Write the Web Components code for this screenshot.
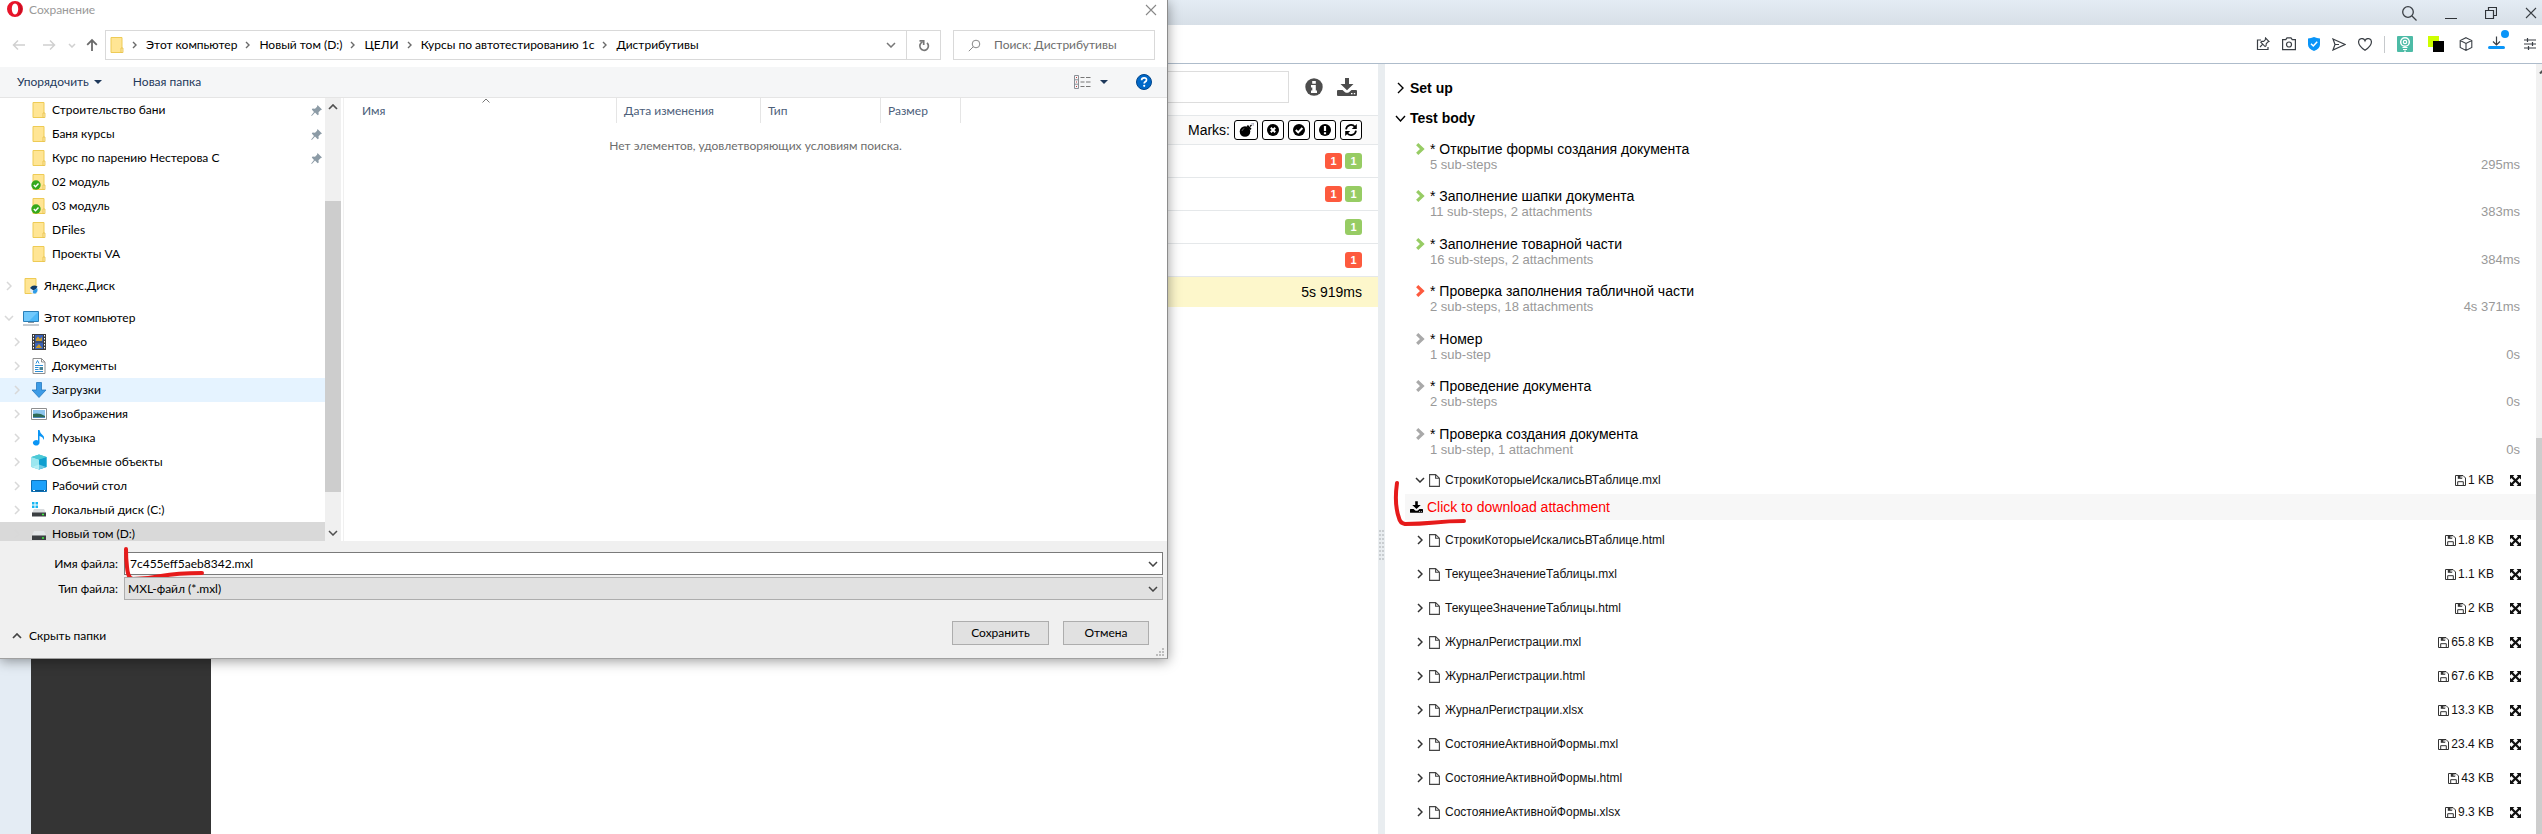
<!DOCTYPE html>
<html lang="ru">
<head>
<meta charset="utf-8">
<title>Сохранение</title>
<style>
  html, body { margin: 0; height: 100%; }
  body { font: 14px/16px "Liberation Sans", Arial, sans-serif; color: #000; overflow: hidden; background: #fff; }
</style>
</head>
<body>
<app-desktop></app-desktop>

<script>
const TRAY = '<path fill="currentColor" fill-rule="evenodd" d="M8 0h4v6h4.500L10 12.200 3.500 6H8zM1 12h4.500l2.500 2.200q2 1.300 4 0l2.500-2.200H19q1 0 1 1v4q0 1-1 1H1q-1 0-1-1v-4q0-1 1-1zm13 3v1.300h1.500V15zm2.800 0v1.300h1.400V15z"/>';
const ICONS = {
  opera: [16, 16, '<path fill="#e8152a" fill-rule="evenodd" d="M8 0a8 8 0 1 0 0 16A8 8 0 0 0 8 0zm0 2.600c2 0 3.200 2.400 3.200 5.400S10 13.400 8 13.400 4.800 11 4.800 8 6 2.600 8 2.600z"/><path fill="#a50a1c" d="M10.500 1.200C13 2.400 15 4.800 15 8s-2 5.600-4.500 6.800C12.300 13 13 10.500 13 8s-.7-5-2.500-6.800z" opacity=".55"/>'],
  back: [14, 12, '<path d="M13 6H1.500M6 1.500 1.500 6 6 10.500" fill="none" stroke="currentColor" stroke-width="1.500"/>'],
  forward: [14, 12, '<path d="M1 6h11.500M8 1.500 12.500 6 8 10.500" fill="none" stroke="currentColor" stroke-width="1.500"/>'],
  up: [12, 14, '<path d="M6 13V2M1.200 6.800 6 2l4.800 4.800" fill="none" stroke="currentColor" stroke-width="1.800"/>'],
  down: [10, 6, '<path d="M1 1l4 4 4-4" fill="none" stroke="currentColor" stroke-width="1.500"/>'],
  downSmall: [8, 5, '<path d="M1 1l3 3 3-3" fill="none" stroke="currentColor" stroke-width="1.500"/>'],
  upSmall: [8, 5, '<path d="M.5 4.500 4 1l3.500 3.500" fill="none" stroke="currentColor"/>'],
  upCaret: [10, 6, '<path d="M1 5l4-4 4 4" fill="none" stroke="currentColor" stroke-width="1.700"/>'],
  crumb: [5, 8, '<path d="M1 1l3 3-3 3" fill="none" stroke="currentColor" stroke-width="1.400"/>'],
  refresh: [12, 13, '<path d="M4.500 3A4.300 4.300 0 1 0 9 3.800" fill="none" stroke="currentColor" stroke-width="1.700"/><path d="M1.500 1.800h4.200V6" fill="none" stroke="currentColor" stroke-width="1.700"/>'],
  find: [13, 13, '<circle cx="8" cy="5" r="3.800" fill="none" stroke="currentColor"/><path d="M5.200 7.800.8 12.200" stroke="currentColor"/>'],
  close: [12, 12, '<path d="M1 1l10 10M11 1 1 11" stroke="currentColor" stroke-width="1.100"/>'],
  triangle: [8, 4, '<path d="M0 0h8L4 4z" fill="currentColor"/>'],
  views: [17, 14, '<path d="M.5.5h4v13h-4zM.5 4.800h4M.5 9.200h4" fill="none" stroke="#8a8f96"/><path d="M2 2.500h1M2 7h1M2 11.500h1" stroke="#c23b3b"/><path d="M6.500 2.500h4M12 2.500h4.500M6.500 7h4M12 7h4.500M6.500 11.500h4M12 11.500h4.500" stroke="#777"/>'],
  help: [16, 16, '<circle cx="8" cy="8" r="7.500" fill="#0068c8" stroke="#00458a"/><path d="M5.600 6.300q0-2.500 2.500-2.500t2.400 2.100q0 1.100-1.200 1.900-1.100.7-1.100 1.700" fill="none" stroke="#fff" stroke-width="1.700"/><circle cx="8.200" cy="11.800" r="1.100" fill="#fff"/>'],
  folder: [16, 16, '<path d="M2 .5h11v15H2z" fill="#ffe594" stroke="#eecb55"/><path d="M12 11h2v4.500h-2z" fill="#ffe9a6" stroke="#e6c04a" stroke-width=".8"/>'],
  folderDone: [16, 16, '<path d="M2 .5h11v15H2z" fill="#ffe594" stroke="#eecb55"/><path d="M12 11h2v4.500h-2z" fill="#ffe9a6" stroke="#e6c04a" stroke-width=".8"/><circle cx="5" cy="11" r="4.700" fill="#35a81c"/><path d="M2.800 11l1.700 1.700 3-3.200" fill="none" stroke="#fff" stroke-width="1.400"/>'],
  yandex: [16, 16, '<path d="M2 .5h11v15H2z" fill="#ffe594" stroke="#eecb55"/><circle cx="11" cy="12" r="4" fill="#e4eef6"/><path d="M7 10q3-4 7.500-1.500-1 3-4 4z" fill="#113a66"/><path d="M10 13l4-3q1.500 3-1.500 5.500-3 .5-2.500-2.500z" fill="#2d9be8"/>'],
  computer: [16, 16, '<path d="M.5 1.500h15v10H.5z" fill="#4db8f8" stroke="#2a7fb8"/><path d="M1 2h14L6 11H1z" fill="#8ad4ff" opacity=".6"/><path d="M5 12.500h6M0 15h16" stroke="#8b98a3"/>'],
  video: [16, 16, '<path d="M1 0h14v16H1z" fill="#3c3c3c"/><path d="M4 1h8v6.500H4zM4 8.500h8V15H4z" fill="#3a62b8"/><path d="M5 5l2-2.500L9 5l2-2v4H5zM5 13l3-3 3 4H5z" fill="#c99a2a"/><path d="M2.500 1v14M13.500 1v14" stroke="#fff" stroke-dasharray="1.500 1.500"/>'],
  document: [16, 16, '<path d="M2 .5h8.500L14 4v11.500H2z" fill="#fff" stroke="#8f8f8f"/><path d="M10.500.5V4H14" fill="none" stroke="#8f8f8f"/><path d="M4 7.500h8M4 9.500h3.500M4 11.500h3.500M4 13.500h8M5 5.500l1.500-3 1.500 3" stroke="#2c8fd6" fill="none"/><path d="M8.500 9h3.500v3H8.500z" fill="#4b8291"/>'],
  download: [16, 16, '<path d="M5.500.5h5V8H15l-7 7.500L1 8h4.500z" fill="#3d9be6" stroke="#2478bf" stroke-width=".8"/>'],
  picture: [16, 16, '<path d="M.5 2.500h15v11H.5z" fill="#fff" stroke="#8f8f8f"/><path d="M2 4h12v8H2z" fill="#8ec5ee"/><path d="M2 8q6-1.500 12 2v2H2z" fill="#2e6b57"/><path d="M2 11h12v1H2z" fill="#4e87b8"/>'],
  music: [16, 16, '<path d="M7 0h1.500q.5 3 3 5t1 5q0-3-4-4v7a3.300 2.700 0 1 1-1.500-2.500z" fill="#0a95f5"/>'],
  objects: [16, 16, '<path d="M8 .5 15.500 3v10L8 15.500.5 13V3z" fill="#35bcd6"/><path d="M.5 3 8 5.500v10L.5 13z" fill="#9be7f0"/><path d="M8 5.500 15.500 3v10L8 15.500z" fill="#0f9fd0"/><path d="M.5 3 8 .5 15.500 3 8 5.500z" fill="#4cc9d6"/><path d="M8 5.500v5L15 13l-7 2.500L1 13l7-2.500" fill="#cdf7fa" opacity=".5"/>'],
  desktop: [16, 16, '<path d="M.5 2.500h15v11H.5z" fill="#1ba1fb" stroke="#0c6fb4"/><path d="M1 12.500h14" stroke="#0b5c96"/><path d="M2 12.500h2M13 12.500h1" stroke="#fff"/>'],
  diskC: [16, 16, '<path d="M1 0h2.500v2.500H1zM4.500 0H7v2.500H4.500zM1 3.500h2.500V6H1zM4.500 3.500H7V6H4.500z" fill="#18b6f2"/><path d="M3 7h10l2 4H1z" fill="#d9dcde"/><path d="M1 10.500h14v4H1z" fill="#3b3f42"/><path d="M11 12.500h2" stroke="#3ef23e" stroke-width="1.500"/>'],
  disk: [16, 16, '<path d="M3 5h10l2 4.500H1z" fill="#e4e7e9"/><path d="M1 9.500h14v4.500H1z" fill="#3b3f42"/><path d="M11 12h2" stroke="#3ef23e" stroke-width="1.500"/>'],
  pin: [11, 11, '<path d="M6.500 0 11 4.500l-1.500.7-2 2 .2 2.300-1 .8-2.700-2.700L.8 11l-.6-.4L3 7 .8 4.500l.8-1 2.400.2 2-2z" fill="#8c9ba6"/>'],
  expander: [6, 10, '<path d="M1 1l4 4-4 4" fill="none" stroke="currentColor" stroke-width="1.500"/>'],
  grip: [8, 8, '<path d="M6 0h2v2H6zM3 3h2v2H3zM6 3h2v2H6zM0 6h2v2H0zM3 6h2v2H3zM6 6h2v2H6z" fill="#bdbdbd"/>'],
  lens: [15, 15, '<circle cx="6" cy="6" r="5.300" fill="none" stroke="#3a3f45" stroke-width="1.300"/><path d="M10 10l4.500 4.500" stroke="#3a3f45" stroke-width="1.300"/>'],
  minimize: [12, 12, '<path d="M0 11.500h12" stroke="#2f3338"/>'],
  restore: [12, 12, '<path d="M.5 3.500h8v8h-8zM3.500 3.500v-3h8v8h-3" fill="none" stroke="#2f3338" stroke-width="1.200"/>'],
  edit: [14, 14, '<path d="M5 3H1.500v9.500H12V10" fill="none" stroke="currentColor" stroke-width="1.200"/><path d="M9.500 1 13 4.500l-1.200.5-1.600 1.800-.1 2-1 .8L4.800 5.200l.9-.9 2 .1 1.600-1.600zM6.800 7.200 4 10" fill="none" stroke="currentColor" stroke-width="1.100"/>'],
  camera: [14, 14, '<path d="M.6 2.600h3.200L5 .8h4l1.200 1.800h3.200v10H.6z" fill="none" stroke="currentColor" stroke-width="1.200"/><circle cx="7" cy="7.500" r="2.500" fill="none" stroke="currentColor" stroke-width="1.200"/>'],
  shield: [12, 14, '<path d="M0 1.500q3-.2 6-1.500 3 1.300 6 1.500v6q0 4-6 6.500-6-2.500-6-6.500z" fill="#0a95f8"/><path d="M3 6.800 5.300 9 9.200 4.800" fill="none" stroke="#fff" stroke-width="1.500"/>'],
  send: [14, 13, '<path d="M1 1l12 5.500L1 12l2-5.500z M3 6.500h4" fill="none" stroke="currentColor" stroke-width="1.200"/>'],
  heart: [14, 13, '<path d="M7 12.200Q.6 8 .6 4.200A3.300 3.300 0 0 1 7 2.800a3.300 3.300 0 0 1 6.400 1.400Q13.400 8 7 12.200z" fill="none" stroke="currentColor" stroke-width="1.200"/>'],
  bulb: [16, 16, '<rect width="16" height="16" rx="1" fill="#4dbba6"/><circle cx="8" cy="6" r="4.300" fill="none" stroke="#fff" stroke-width="1.500"/><circle cx="8" cy="6" r="1.700" fill="none" stroke="#fff" stroke-width="1.200"/><path d="M5.500 11.500h5M6 13.500h4M7 15.200h2" stroke="#fff"/>'],
  squares: [16, 16, '<path d="M0 0h11v11H0z" fill="#ceff00"/><path d="M5 5h11v11H5z" fill="#000"/>'],
  cube: [14, 14, '<path d="M7 .7 12.800 3.500v7L7 13.400l-5.800-2.900v-7zM1.200 3.500 7 6.500l5.800-3M7 6.500v6.900" fill="none" stroke="currentColor" stroke-width="1.100"/>'],
  loading: [21, 20, '<path d="M8.500 6.500V15M5 11.500 8.500 15l3.500-3.500" fill="none" stroke="currentColor" stroke-width="1.200"/><path d="M1.500 17.500h14" stroke="#0a95f8" stroke-width="3" stroke-linecap="round"/><circle cx="17" cy="4" r="4" fill="#0a95f8"/>'],
  sliders: [12, 12, '<path d="M0 2h12M0 6h12M0 10h12M3.500 0v4M8.500 4v4M4.500 8v4" stroke="currentColor" stroke-width="1.200"/>'],
  info: [18, 18, '<circle cx="9" cy="9" r="8.700" fill="#4d4d4d"/><path d="M7.200 3h3.600v2.800H7.200zM6 7h4.800v5.400H12V15H6v-2.600h1.300V9.500H6z" fill="#fff"/>'],
  tray: [20, 18, TRAY],
  bomb: [15, 14, '<circle cx="6" cy="8.500" r="5.300"/><path d="M7.500 3.200l3.800 3.800 1.200-1.300L9 2z"/><path d="M11 3.500 12.500 2" stroke="#000" stroke-width="1.300"/><path d="M12 .8h3M14.200 0v3" stroke="#99a" stroke-width=".7"/><path d="M3 8q.3-2 2.300-2.500" stroke="#777" fill="none" stroke-width=".8"/>'],
  failed: [14, 14, '<circle cx="7" cy="7" r="6"/><path d="M4.800 4.800l4.400 4.400M9.200 4.800 4.800 9.200" stroke="#fff" stroke-width="2"/>'],
  passed: [14, 14, '<circle cx="7" cy="7" r="6"/><path d="M3.800 7l2.400 2.400 4.200-4.400" stroke="#fff" stroke-width="2" fill="none"/>'],
  alert: [14, 14, '<circle cx="7" cy="7" r="6"/><path d="M7 3v5M7 9.300v1.900" stroke="#fff" stroke-width="2.200"/>'],
  retry: [14, 14, '<path d="M2 6.300A5 5 0 0 1 11 4M12 7.700A5 5 0 0 1 3 10" fill="none" stroke="#000" stroke-width="1.700"/><path d="M12.800 1v5h-5zM1.200 13V8h5z"/>'],
  thinRight: [7, 12, '<path d="M1 1l5 5-5 5" fill="none" stroke="currentColor" stroke-width="1.400"/>'],
  thinDown: [11, 7, '<path d="M1 1l4.500 5L10 1" fill="none" stroke="currentColor" stroke-width="1.400"/>'],
  boldRight: [9, 12, '<path d="M1.200 1.200 6.300 6l-5.100 4.800" fill="none" stroke="currentColor" stroke-width="3.200"/>'],
  file: [11, 13, '<path d="M.6.6h6L10.400 4.200v8.200H.6zM6.600.6v3.700h3.800" fill="none" stroke="#444" stroke-width="1.100"/>'],
  save: [11, 11, '<path d="M.5.5h7.500L10.500 3v7.500H.5z" fill="none" stroke="#333"/><path d="M2.800.5h4.400v3.300H2.800z" fill="#333"/><path d="M5.600 1h1v2h-1z" fill="#fff"/><path d="M2.700 10.500V6.700h5.600v3.800" fill="none" stroke="#333"/>'],
  expand: [11, 11, '<path d="M0 0h4.400L3 1.400l2.500 2.500L8 1.400 6.600 0H11v4.400L9.600 3 7.100 5.500 9.600 8 11 6.600V11H6.600L8 9.600 5.500 7.100 3 9.600 4.400 11H0V6.600L1.400 8l2.500-2.500L1.400 3 0 4.400z" fill="#111"/>'],
};

function define(tag, css, html) {
  customElements.define(tag, class extends HTMLElement {
    connectedCallback() {
      if (this.shadowRoot) return;
      const root = this.attachShadow({ mode: 'open' });
      root.innerHTML = `<style>*{box-sizing:border-box}button{font:inherit;color:inherit;background:none;border:0;padding:0;margin:0}${css}</style>` +
        (typeof html === 'function' ? html(this) : html);
    }
  });
}

define('ui-icon', ':host{display:block;flex:none;line-height:0}svg{display:block}', el => {
  const [w, h, body] = ICONS[el.getAttribute('name')];
  return `<svg width="${w}" height="${h}" viewBox="0 0 ${w} ${h}" aria-hidden="true">${body}</svg>`;
});

/* ---------- browser window ---------- */
define('browser-chrome', `
  :host{display:block;color:#3a3f45}
  .caption{height:25px;padding:1px 5px 0 0;display:flex;justify-content:flex-end;align-items:center;gap:28px;background:linear-gradient(#e4ecf4,#d7dfe7)}
  .tools{height:39px;padding:0 6px 0 0;display:flex;justify-content:flex-end;align-items:center;gap:12px;border-bottom:1px solid #aebccb;background:#fff}
  button{display:block}
  .rule{width:1px;height:17px;background:#c6c9cc}
  .ext{display:flex;align-items:center;gap:15px}
  .load{padding-bottom:8px}
`, `
  <div class="caption">
    <button aria-label="Поиск вкладок"><ui-icon name="lens"></ui-icon></button>
    <button aria-label="Свернуть"><ui-icon name="minimize"></ui-icon></button>
    <button aria-label="Развернуть"><ui-icon name="restore"></ui-icon></button>
    <button aria-label="Закрыть"><ui-icon name="close"></ui-icon></button>
  </div>
  <div class="tools">
    <button aria-label="Доски"><ui-icon name="edit"></ui-icon></button>
    <button aria-label="Снимок"><ui-icon name="camera"></ui-icon></button>
    <button aria-label="Защита"><ui-icon name="shield"></ui-icon></button>
    <button aria-label="Поток"><ui-icon name="send"></ui-icon></button>
    <button aria-label="Закладки"><ui-icon name="heart"></ui-icon></button>
    <span class="rule"></span>
    <div class="ext">
      <button aria-label="Расширение 1"><ui-icon name="bulb"></ui-icon></button>
      <button aria-label="Расширение 2"><ui-icon name="squares"></ui-icon></button>
      <button aria-label="Расширения"><ui-icon name="cube"></ui-icon></button>
      <button aria-label="Загрузки" class="load"><ui-icon name="loading"></ui-icon></button>
      <button aria-label="Настройки"><ui-icon name="sliders"></ui-icon></button>
    </div>
  </div>
`);

/* ---------- report, left pane ---------- */
define('count-badge', `
  :host{display:block;width:17px;height:16px;border-radius:3px;color:#fff;font:bold 11px/16px "Liberation Sans",Arial,sans-serif;text-align:center;background:#97cc64}
  :host([failed]){background:#fd5a3e}
`, '<slot></slot>');

define('report-tree', `
  :host{display:block;background:#fff;min-width:0}
  .search{height:52px;display:flex;align-items:center;padding:0 21px 6px 12px;border-bottom:1px solid #e5e8ea}
  input{flex:1;min-width:0;height:32px;border:1px solid #ddd;margin-right:16px;padding:0 8px;font:inherit}
  .search button{color:#4d4d4d}
  .search button + button{margin-left:14px}
  .marks{height:29px;display:flex;justify-content:flex-end;align-items:center;gap:4px;padding-right:16px;background:#fafafa;border-bottom:1px solid #e5e8ea}
  .marks button{width:22px;height:20px;border:1px solid #000;border-radius:3px;background:#fff;display:flex;align-items:center;justify-content:center}
  .marks button:first-of-type{width:24px}
  .row{height:33px;display:flex;justify-content:flex-end;align-items:center;gap:3px;padding-right:16px;border-bottom:1px solid #e5e8ea}
  .row.current{height:30px;background:#fdf7cb;border:0}
`, `
  <div class="search">
    <input type="text" aria-label="Поиск">
    <button aria-label="Информация"><ui-icon name="info"></ui-icon></button>
    <button aria-label="Скачать"><ui-icon name="tray"></ui-icon></button>
  </div>
  <div class="marks"><span>Marks:</span>
    <button aria-label="Flaky"><ui-icon name="bomb"></ui-icon></button>
    <button aria-label="Failed"><ui-icon name="failed"></ui-icon></button>
    <button aria-label="Passed"><ui-icon name="passed"></ui-icon></button>
    <button aria-label="Alert"><ui-icon name="alert"></ui-icon></button>
    <button aria-label="Retry"><ui-icon name="retry"></ui-icon></button>
  </div>
  <div class="row"><count-badge failed>1</count-badge><count-badge>1</count-badge></div>
  <div class="row"><count-badge failed>1</count-badge><count-badge>1</count-badge></div>
  <div class="row"><count-badge>1</count-badge></div>
  <div class="row"><count-badge failed>1</count-badge></div>
  <div class="row current">5s 919ms</div>
`);

define('split-gutter', `
  :host{display:flex;align-items:center;justify-content:center;flex:none;width:7px;background:#e9edf0}
  span{width:6px;height:30px;margin-top:192px;background:repeating-linear-gradient(90deg,transparent 0 2px,#e9edf0 2px 3px),repeating-linear-gradient(#c9cdd0 0 2px,#e9edf0 2px 4px)}
`, '<span></span>');

/* ---------- report, right pane ---------- */
define('section-title', `
  :host{display:block}
  button{display:flex;align-items:center;gap:4px;height:30px;font-weight:bold}
  .slot{width:11px;display:flex;justify-content:center}
`, el => `<button><span class="slot"><ui-icon name="${el.hasAttribute('open') ? 'thinDown' : 'thinRight'}"></ui-icon></span><slot></slot></button>`);

define('test-step', `
  :host{display:grid;grid-template-columns:9px 1fr auto;column-gap:5px;align-items:center;color:#a9a9a9}
  :host([status=passed]) ui-icon{color:#97cc64}
  :host([status=failed]) ui-icon{color:#fd5a3e}
  b{font-weight:normal;color:#000;grid-column:2 / 4}
  small,time{font-size:13px;line-height:16px;color:#999}
  small{grid-column:2}
`, el => `<ui-icon name="boldRight"></ui-icon><b><slot></slot></b><small>${el.getAttribute('note')}</small><time>${el.getAttribute('time')}</time>`);

define('attachment-row', `
  :host{display:flex;align-items:center;height:34px;font-size:12px}
  :host([open]){height:28px}
  button{display:flex;align-items:center;color:#111}
  .slot{width:11px;display:flex;justify-content:center;margin-right:4px;color:#333}
  .open{margin-right:auto}
  .open ui-icon[name=file]{margin-right:5px}
  .size{display:flex;align-items:center;gap:2px;margin-right:16px;color:#111}
`, el => `
  <button class="open"><span class="slot"><ui-icon name="${el.hasAttribute('open') ? 'down' : 'expander'}"></ui-icon></span><ui-icon name="file"></ui-icon><slot></slot></button>
  <span class="size"><ui-icon name="save"></ui-icon>${el.getAttribute('size')}</span>
  <button aria-label="Развернуть"><ui-icon name="expand"></ui-icon></button>`);

define('test-details', `
  :host{display:flex;min-width:0;background:#fff}
  .content{flex:1;min-width:0;padding-top:9px;overflow:hidden}
  .sections{padding-left:10px}
  .steps{padding:8px 16px 0 31px}
  test-step{margin-bottom:15px}
  test-step:nth-child(even){margin-bottom:16px}
  test-step:last-child{margin-bottom:8px}
  .files{padding:0 15px 0 29px}
  .get{position:relative;height:26px;margin:0 0 3px 20px;padding-left:5px;background:#f7f7f7;display:flex;align-items:center}
  .get a{display:flex;align-items:center;gap:4px;color:#f00;text-decoration:none}
  .get a svg{color:#000}
  .mark{position:absolute;left:-12px;top:-14px}
  .scroll{flex:none;width:6px;background:#f1f1f1;padding-top:374px;display:flex;position:relative}
  .scroll i{flex:1;background:#cdcdcd}
  .scroll svg{position:absolute;left:3px;top:5px}
`, `
  <div class="content">
    <div class="sections">
      <section-title>Set up</section-title>
      <section-title open>Test body</section-title>
    </div>
    <div class="steps">
      <test-step status="passed" note="5 sub-steps" time="295ms">* Открытие формы создания документа</test-step>
      <test-step status="passed" note="11 sub-steps, 2 attachments" time="383ms">* Заполнение шапки документа</test-step>
      <test-step status="passed" note="16 sub-steps, 2 attachments" time="384ms">* Заполнение товарной части</test-step>
      <test-step status="failed" note="2 sub-steps, 18 attachments" time="4s 371ms">* Проверка заполнения табличной части</test-step>
      <test-step note="1 sub-step" time="0s">* Номер</test-step>
      <test-step note="2 sub-steps" time="0s">* Проведение документа</test-step>
      <test-step note="1 sub-step, 1 attachment" time="0s">* Проверка создания документа</test-step>
    </div>
    <div class="files"><attachment-row open size="1 KB">СтрокиКоторыеИскалисьВТаблице.mxl</attachment-row></div>
    <div class="get">
      <a href="#download"><svg width="13" height="12" viewBox="0 0 20 18" aria-hidden="true">${TRAY}</svg>Click to download attachment</a>
      <svg class="mark" width="76" height="48" viewBox="0 0 76 48" aria-hidden="true"><path d="M4 3Q1 24 6 38Q7 43 12 44Q26 44 42 42.500Q56 41 71 41" fill="none" stroke="#e61b1b" stroke-width="4" stroke-linecap="round"/></svg>
    </div>
    <div class="files">
      <attachment-row size="1.8 KB">СтрокиКоторыеИскалисьВТаблице.html</attachment-row>
      <attachment-row size="1.1 KB">ТекущееЗначениеТаблицы.mxl</attachment-row>
      <attachment-row size="2 KB">ТекущееЗначениеТаблицы.html</attachment-row>
      <attachment-row size="65.8 KB">ЖурналРегистрации.mxl</attachment-row>
      <attachment-row size="67.6 KB">ЖурналРегистрации.html</attachment-row>
      <attachment-row size="13.3 KB">ЖурналРегистрации.xlsx</attachment-row>
      <attachment-row size="23.4 KB">СостояниеАктивнойФормы.mxl</attachment-row>
      <attachment-row size="43 KB">СостояниеАктивнойФормы.html</attachment-row>
      <attachment-row size="9.3 KB">СостояниеАктивнойФормы.xlsx</attachment-row>
    </div>
  </div>
  <div class="scroll"><svg width="4" height="5" viewBox="0 0 4 5"><path d="M1 4.500 4 1.500" stroke="#505050" stroke-width="2"/></svg><i></i></div>
`);

/* ---------- save dialog ---------- */
define('tree-item', `
  :host{display:block}
  button{display:flex;align-items:center;width:100%;height:24px;padding-left:14px;text-align:left}
  :host([root]) button{padding-left:6px}
  :host([hover]) button{background:#e5f3ff}
  :host([selected]) button{background:#d9d9d9}
  .exp{width:6px;display:flex;justify-content:center;color:#d8d8d8;margin-right:11px}
  .exp ui-icon{margin:0 -2px}
  ui-icon.kind{margin-right:5px}
  ui-icon[name=pin]{margin-left:auto;margin-right:3px}
`, el => {
  const fold = el.getAttribute('fold');
  return `<button><span class="exp">${fold ? `<ui-icon name="${fold}"></ui-icon>` : ''}</span><ui-icon class="kind" name="${el.getAttribute('icon')}"></ui-icon><slot></slot>${el.hasAttribute('pinned') ? '<ui-icon name="pin"></ui-icon>' : ''}</button>`;
});

define('folder-tree', `
  :host{display:flex;width:344px;flex:none;overflow:hidden;border-right:1px solid #f0f0f0}
  nav{flex:1;display:flex;flex-direction:column;overflow:hidden}
  tree-item{flex:none}
  tree-item[root]{margin-top:8px}
  .bar{width:16px;margin-right:2px;background:#f0f0f0;display:flex;flex-direction:column;align-items:center;padding:6px 0 5px;color:#505050}
  .bar i{width:16px;height:291px;margin:91px 0 auto;background:#cdcdcd}
`, `
  <nav>
    <tree-item icon="folder" pinned>Строительство бани</tree-item>
    <tree-item icon="folder" pinned>Баня курсы</tree-item>
    <tree-item icon="folder" pinned>Курс по парению Нестерова С</tree-item>
    <tree-item icon="folderDone">02 модуль</tree-item>
    <tree-item icon="folderDone">03 модуль</tree-item>
    <tree-item icon="folder">DFiles</tree-item>
    <tree-item icon="folder">Проекты VA</tree-item>
    <tree-item root icon="yandex" fold="expander">Яндекс.Диск</tree-item>
    <tree-item root icon="computer" fold="down">Этот компьютер</tree-item>
    <tree-item icon="video" fold="expander">Видео</tree-item>
    <tree-item icon="document" fold="expander">Документы</tree-item>
    <tree-item icon="download" fold="expander" hover>Загрузки</tree-item>
    <tree-item icon="picture" fold="expander">Изображения</tree-item>
    <tree-item icon="music" fold="expander">Музыка</tree-item>
    <tree-item icon="objects" fold="expander">Объемные объекты</tree-item>
    <tree-item icon="desktop" fold="expander">Рабочий стол</tree-item>
    <tree-item icon="diskC" fold="expander">Локальный диск (C:)</tree-item>
    <tree-item icon="disk" fold="expander" selected>Новый том (D:)</tree-item>
  </nav>
  <div class="bar"><ui-icon name="upCaret"></ui-icon><i></i><ui-icon name="down"></ui-icon></div>
`);

define('file-list', `
  :host{display:block;flex:1;min-width:0;position:relative}
  table{border-collapse:separate;border-spacing:0;table-layout:fixed;width:617px}
  th{height:25px;padding:0 0 0 7px;border-right:1px solid #e5e5e5;font-weight:normal;text-align:left;color:#4c607a}
  th:first-child{padding-left:18px}
  .sort{position:absolute;left:138px;top:0;color:#777}
  p{margin:15px 0 0;text-align:center;color:#6d6d6d}
`, `
  <table><colgroup><col style="width:273px"><col style="width:144px"><col style="width:120px"><col style="width:80px"></colgroup>
    <thead><tr><th>Имя</th><th>Дата изменения</th><th>Тип</th><th>Размер</th></tr></thead></table>
  <ui-icon class="sort" name="upSmall"></ui-icon>
  <p>Нет элементов, удовлетворяющих условиям поиска.</p>
`);

define('path-bar', `
  :host{display:flex;align-items:center;height:30px;padding-left:12px;color:#d0d0d0}
  .go{margin-right:16px}
  .recent{margin:0 10px 0 -4px}
  .up{color:#6a6a6a;margin-right:7px}
  .crumbs{flex:1;height:30px;border:1px solid #d9d9d9;display:flex;align-items:center;padding-left:3px;color:#000}
  .crumbs > ui-icon[name=crumb]{color:#6a6a6a;margin:0 9px 0 8px}
  .crumbs > ui-icon:first-child{margin-right:-1px}
  .drop{margin-left:auto;padding:0 10px;color:#777}
  .reload{width:34px;height:30px;border:1px solid #d9d9d9;border-left:0;display:flex;align-items:center;justify-content:center;color:#777}
  label{width:202px;height:30px;margin:0 12px 0 12px;border:1px solid #d9d9d9;display:flex;align-items:center;gap:13px;padding-left:14px;color:#888}
  input{flex:1;min-width:0;border:0;outline:0;padding:0;font:inherit;background:none}
  input::placeholder{color:#6d6d6d;opacity:1}
`, `
  <button class="go" aria-label="Назад"><ui-icon name="back"></ui-icon></button>
  <button class="go" aria-label="Вперед"><ui-icon name="forward"></ui-icon></button>
  <button class="recent" aria-label="Последние места"><ui-icon name="downSmall"></ui-icon></button>
  <button class="up" aria-label="Вверх"><ui-icon name="up"></ui-icon></button>
  <div class="crumbs"><ui-icon name="folder"></ui-icon>
    <ui-icon name="crumb"></ui-icon><button>Этот компьютер</button>
    <ui-icon name="crumb"></ui-icon><button>Новый том (D:)</button>
    <ui-icon name="crumb"></ui-icon><button>ЦЕЛИ</button>
    <ui-icon name="crumb"></ui-icon><button>Курсы по автотестированию 1с</button>
    <ui-icon name="crumb"></ui-icon><button>Дистрибутивы</button>
    <button class="drop" aria-label="Предыдущие расположения"><ui-icon name="down"></ui-icon></button>
  </div>
  <button class="reload" aria-label="Обновить"><ui-icon name="refresh"></ui-icon></button>
  <label><ui-icon name="find"></ui-icon><input type="search" aria-label="Поиск" placeholder="Поиск: Дистрибутивы"></label>
`);

define('save-dialog', `
  :host{display:block;width:1168px;max-width:100%;background:#fff;border-right:1px solid #8c8c8c;border-bottom:1px solid #a0a0a0;box-shadow:0 2px 12px rgba(0,0,0,.4);font:12px/16px Lato,"Open Sans","Liberation Sans",sans-serif;box-sizing:border-box}
  header{height:30px;display:flex;padding:1px 14px 0 7px;gap:6px;color:#999}
  header span{line-height:18px;margin-right:auto}
  header button{height:18px;color:#888;margin-right:-4px}
  .tools{height:31px;margin-top:7px;background:#f5f6f7;border-bottom:1px solid #e5e5e5;display:flex;align-items:center;padding:0 15px 0 17px;color:#1e395b}
  .tools button{display:flex;align-items:center;gap:5px}
  .new{margin-left:31px}
  .view{margin-left:auto}
  .tools .view{gap:9px;margin-right:28px}
  .panes{display:flex;height:443px}
  footer{position:relative;background:#f0f0f0;padding:11px 4px 13px 12px}
  .fields{display:grid;grid-template-columns:106px 1fr;gap:2px 6px;align-items:center}
  .fields label{text-align:right}
  .combo{display:flex;height:23px;align-items:center;border:1px solid #7a7a7a;background:#fff;position:relative}
  .combo.type{background:#e1e1e1;border-color:#adadad}
  input,select{flex:1;min-width:0;height:100%;appearance:none;border:0;outline:0;background:none;padding:0 5px;font:inherit;color:#000}
  select{padding:0 3px}
  .combo > ui-icon{margin-right:4px;color:#444}
  .mark{position:absolute;left:-2px;top:-8px}
  .actions{display:flex;align-items:flex-end;gap:14px;padding-top:21px;padding-right:14px}
  .hide{display:flex;align-items:center;height:18px;gap:7px;margin-right:auto;color:#000}
  .hide ui-icon{color:#444}
  .push{height:24px;width:86px;border:1px solid #adadad;background:#e1e1e1}
  .push.main{width:97px}
  .grip{position:absolute;right:3px;bottom:2px}
`, `
  <header><ui-icon name="opera"></ui-icon><span>Сохранение</span><button aria-label="Закрыть"><ui-icon name="close"></ui-icon></button></header>
  <path-bar></path-bar>
  <div class="tools">
    <button>Упорядочить <ui-icon name="triangle"></ui-icon></button>
    <button class="new">Новая папка</button>
    <button class="view" aria-label="Вид"><ui-icon name="views"></ui-icon><ui-icon name="triangle"></ui-icon></button>
    <button aria-label="Справка"><ui-icon name="help"></ui-icon></button>
  </div>
  <div class="panes"><folder-tree></folder-tree><file-list></file-list></div>
  <footer>
    <div class="fields">
      <label for="name">Имя файла:</label>
      <div class="combo"><input id="name" type="text" value="7c455eff5aeb8342.mxl"><ui-icon name="down"></ui-icon>
        <svg class="mark" width="84" height="38" viewBox="0 0 84 38" aria-hidden="true"><path d="M3 4Q3 14 4 22Q5 34 10 34Q24 34 38 31Q54 28 79 28" fill="none" stroke="#e61b1b" stroke-width="4" stroke-linecap="round"/></svg></div>
      <label for="type">Тип файла:</label>
      <div class="combo type"><select id="type"><option>MXL-файл (*.mxl)</option></select><ui-icon name="down"></ui-icon></div>
    </div>
    <div class="actions">
      <button class="hide"><ui-icon name="upCaret"></ui-icon>Скрыть папки</button>
      <button class="push main">Сохранить</button>
      <button class="push">Отмена</button>
    </div>
    <ui-icon class="grip" name="grip"></ui-icon>
  </footer>
`);

define('app-desktop', `
  :host{display:flex;flex-direction:column;height:100vh;position:relative;overflow:hidden}
  .page{flex:1;display:flex;min-height:0}
  .side{flex:none;width:31px;background:#e4ecf4}
  .menu{flex:none;width:180px;background:#343434}
  report-tree{flex:1167 1 0}
  test-details{flex:1157 1 0}
  save-dialog{position:absolute;left:0;top:0}
`, `
  <browser-chrome></browser-chrome>
  <div class="page">
    <div class="side"></div><div class="menu"></div>
    <report-tree></report-tree><split-gutter></split-gutter><test-details></test-details>
  </div>
  <save-dialog></save-dialog>
`);
</script>
</body>
</html>
